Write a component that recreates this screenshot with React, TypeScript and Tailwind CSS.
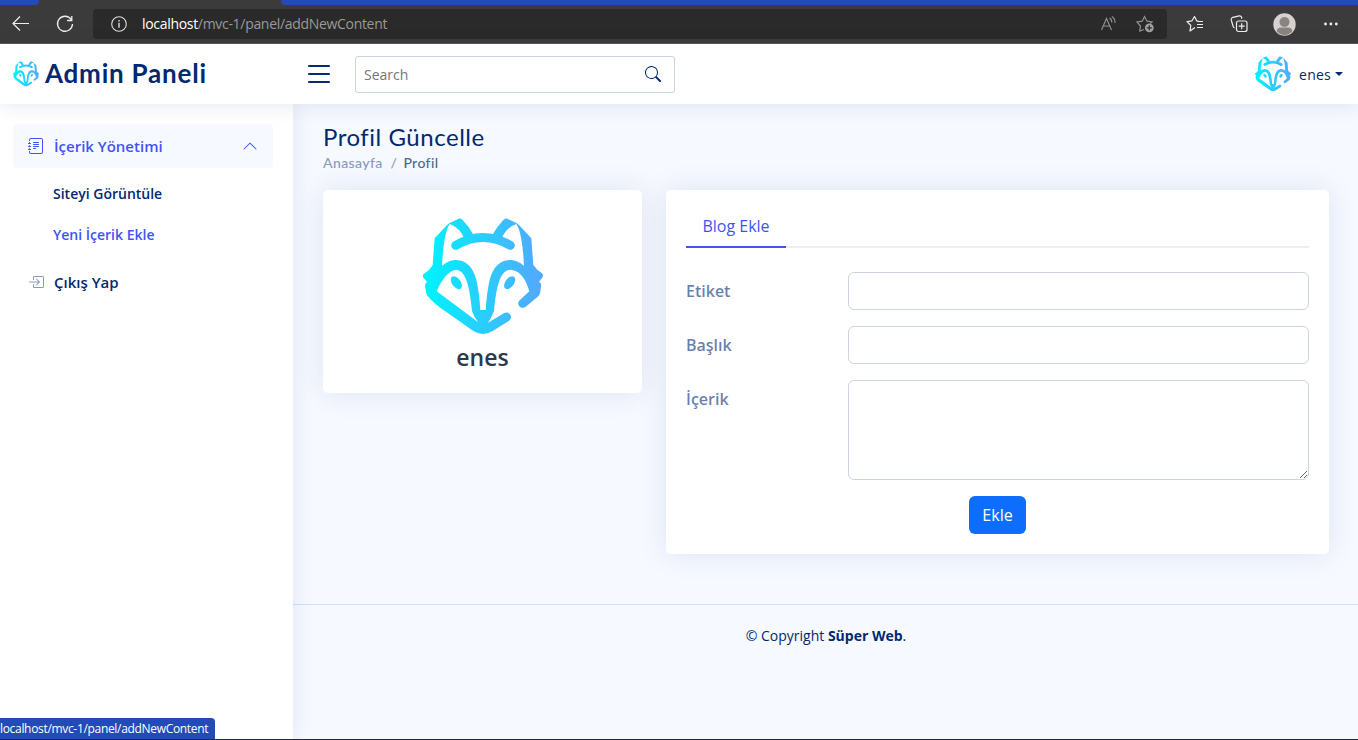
import { useId } from 'react';
import type { ReactNode } from 'react';
import { BsBoxArrowInRight, BsChevronUp, BsJournalText, BsList, BsSearch } from 'react-icons/bs';

function FoxLogo({ className }: { className: string }) {
  const id = useId();
  const fill = `url(#${id})`;
  return (
    <svg viewBox="39 36 360 360" className={className} aria-hidden="true">
      <defs>
        <linearGradient id={id} gradientUnits="userSpaceOnUse" x1="50" y1="0" x2="370" y2="0">
          <stop offset="0" stopColor="#00f2fe" />
          <stop offset="1" stopColor="#4facfe" />
        </linearGradient>
      </defs>
      <g fill={fill}>
        <path d="M146 41Q152 39 157 44Q177 64 189 87L165 105Q150 67 119 57Q101 84 96 182Q118 164 140 165Q184 168 199 224Q208 264 211 315H227Q230 264 239 224Q254 168 298 165Q320 164 342 182Q337 84 319 57Q288 67 273 105L249 87Q261 64 281 44Q286 39 292 41L319 54Q325 57 364 100L370 180Q380 195 396 205Q402 211 396 219L387 230Q396 235 393 243L391 260Q390 269 383 275L349 304C334 317 316 299 329 286L358 259Q340 196 300 194C270 196 259 245 252 318Q246 335 234 353L283 324C299 316 312 338 295 349L248 378Q219 396 190 378L92 309Q51 278 49 265L45 244Q44 236 51 230L40 218Q36 209 44 205Q60 195 68 180L74 100Q113 57 119 54ZM80 259L205 352Q191 335 186 318C179 245 168 196 138 194Q105 200 80 259Z" fillRule="evenodd" />
        <ellipse cx="139" cy="233" rx="13" ry="22" transform="rotate(-37 139 233)" />
        <ellipse cx="299" cy="233" rx="13" ry="22" transform="rotate(37 299 233)" />
      </g>
      <path d="M137 121Q219 74 301 121" fill="none" stroke={fill} strokeWidth="27" strokeLinecap="round" />
    </svg>
  );
}

function BrowserBar() {
  return (
    <div className="h-[44px] shrink-0 border-b border-[#5b5858] bg-[#3b3b3b] font-['Open_Sans',sans-serif]">
      <div className="flex h-[5px] justify-between">
        <div className="w-[39px] rounded-br bg-[#234bb8]" />
        <div className="w-[1077px] rounded-bl bg-[#234bb8]" />
      </div>
      <div className="flex h-[38px] items-center">
        <svg className="ml-3 h-[18px] w-[18px]" viewBox="0 0 18 18" fill="none" stroke="#eee" strokeWidth="1.2">
          <path d="M17 8.5H1M8 1.5l-7 7 7 7" />
        </svg>
        <svg className="ml-[26px] h-[18px] w-[18px]" viewBox="0 0 18 18" fill="none" stroke="#eee" strokeWidth="1.3">
          <path d="M15.2 4.5A7.5 7.5 0 1 0 16.5 9M15.8 1v4.5h-4.7" />
        </svg>
        <div className="ml-[19px] flex h-[30px] w-[1074px] items-center rounded bg-[#2a2a2a]">
          <svg className="ml-[18px] h-4 w-4" viewBox="0 0 16 16" fill="none" stroke="#ddd" strokeWidth="1.1">
            <circle cx="8" cy="8" r="7.3" />
            <path d="M8 6.7v5M8 4v1.4" strokeWidth="1.4" />
          </svg>
          <div className="ml-[15px] grow pb-px text-[14px] tracking-[-0.31px] whitespace-nowrap text-[#999]">
            <span className="text-white">localhost</span>/mvc-1/panel/addNewContent
          </div>
          <svg className="mr-[19px] h-[16px] w-[17px]" viewBox="0 0 17 16" fill="none" stroke="#929292" strokeWidth="1.1">
            <path d="M1.5 14L6.5 2.5l5 11.5M3.3 10h6.4M9.5 2Q12 3.5 11.8 6.5M11.8.5Q15.2 2.5 15 7" />
          </svg>
          <svg className="mr-[13px] h-[18px] w-[18px]" viewBox="0 0 18 18" fill="none" stroke="#929292" strokeWidth="1.2">
            <path d="M8 14.5L3.8 16l.6-5L1 7l5.2-.8L8.5 1.5 11 6.2l5 .8-1.7 1.5" />
            <circle cx="13.3" cy="12.8" r="4.4" fill="#a0a0a0" stroke="none" />
            <path d="M13.3 10.3v5M10.8 12.8h5" stroke="#292929" />
          </svg>
        </div>
        <svg className="ml-[19px] h-[18px] w-[18px]" viewBox="0 0 18 18" fill="none" stroke="#eee" strokeWidth="1.2">
          <path d="M9 12.5L4 16l.8-5.5L1 6.6l5-.8L8.5 1.5l2.2 4.3 1.8.4M11 6.5h6M11 9.5h6M11 12.5h6" strokeLinejoin="round" />
        </svg>
        <svg className="ml-[26px] h-[18px] w-[18px]" viewBox="0 0 18 18" fill="none" stroke="#eee" strokeWidth="1.2">
          <rect x="6.5" y="6" width="10.5" height="10.5" rx="2" />
          <path d="M4.6 13Q3.2 12.5 3 11L1.2 4.9Q.9 2.9 2.8 2.3L9.3.9Q11 .7 11.7 2.5v1.2M11.7 8.2v6M8.7 11.2h6" />
        </svg>
        <svg className="ml-[25px] h-[23px] w-[23px]" viewBox="0 0 23 23">
          <circle cx="11.5" cy="11.5" r="11.2" fill="#d4d1ce" />
          <circle cx="11.5" cy="9" r="5" fill="#898482" />
          <path d="M3.8 18.3Q4 14.5 8 14.5h7q4 0 4.2 3.8a10 10 0 0 1-15.4 0" fill="#898482" />
        </svg>
        <svg className="ml-[26px] h-4 w-4" viewBox="0 0 16 16" fill="#eee">
          <circle cx="3.5" cy="8" r="1.4" />
          <circle cx="8.9" cy="8" r="1.4" />
          <circle cx="14.3" cy="8" r="1.4" />
        </svg>
      </div>
    </div>
  );
}

function Header() {
  return (
    <header className="z-20 flex h-[60px] shrink-0 items-center bg-white shadow-[0_2px_20px_rgba(1,41,112,0.1)]">
      <div className="flex w-[293px] items-center pl-[13px]">
        <FoxLogo className="h-[26px] w-[26px]" />
        <span className="ml-[6px] pb-[2px] text-[26px] leading-[30px] font-bold tracking-[0.78px] whitespace-nowrap text-[#012970] font-['Lato',sans-serif]">Admin Paneli</span>
      </div>
      <BsList className="ml-[10px] h-8 w-8 text-[#012970]" />
      <div className="ml-5 flex h-[37px] w-80 items-center justify-between rounded-[3px] border border-[#012970]/20 px-2 text-[14px]">
        <span className="text-[#757575]">Search</span>
        <BsSearch className="mr-[5px] h-4 w-4 text-[#012970]" />
      </div>
      <div className="mr-[15px] ml-auto flex items-center text-[14px] font-medium tracking-[0.25px] text-[#012970]">
        <FoxLogo className="h-9 w-9" />
        <span className="ml-2">enes</span>
        <span className="ml-1 border-x-4 border-t-4 border-x-transparent border-t-[#012970]" />
      </div>
    </header>
  );
}

function Sidebar() {
  return (
    <aside className="z-10 w-[293px] shrink-0 bg-white pt-5 pl-[13px] font-semibold text-[#012970] shadow-[0_0_20px_rgba(1,41,112,0.1)]">
      <div className="flex h-11 w-[260px] items-center rounded bg-[#f6f9ff] px-[15px] text-[15px] text-[#4154f1]">
        <BsJournalText className="h-4 w-4" />
        <span className="ml-[10px] grow">İçerik Yönetimi</span>
        <BsChevronUp className="h-4 w-4" />
      </div>
      <div className="pt-[5px] pl-10 text-[14px]">
        <div className="flex h-[41px] items-center">Siteyi Görüntüle</div>
        <div className="flex h-[41px] items-center text-[#4154f1]">Yeni İçerik Ekle</div>
      </div>
      <div className="mt-[5px] flex h-[45px] items-center px-[15px] text-[15px]">
        <BsBoxArrowInRight className="mb-px h-4 w-4 text-[#899bbd]" />
        <span className="ml-[10px]">Çıkış Yap</span>
      </div>
    </aside>
  );
}

function Card({ className, children }: { className: string; children: ReactNode }) {
  return <section className={`rounded-[5px] bg-white shadow-[0_0_30px_rgba(1,41,112,0.1)] ${className}`}>{children}</section>;
}

function Field({ label, children }: { label: string; children: ReactNode }) {
  return (
    <label className="mb-4 flex">
      <span className="w-[162px] shrink-0 pt-[7px] font-semibold text-[#012970]/60">{label}</span>
      {children}
    </label>
  );
}

export default function App() {
  return (
    <div className="relative flex h-[740px] w-[1358px] flex-col overflow-hidden bg-[#f6f9ff] font-['Open_Sans',sans-serif] text-[16px] text-[#444]">
      <BrowserBar />
      <Header />
      <div className="flex min-h-0 grow">
        <Sidebar />
        <div className="grow pt-[18px]">
          <div className="h-[68px] pl-[30px] font-['Lato',sans-serif]">
            <h1 className="text-[24px] leading-[30px] font-normal tracking-[0.53px] text-[#012970]">Profil Güncelle</h1>
            <div className="flex gap-2 text-[14px] leading-[21px] font-medium tracking-[0.4px] text-[#899bbd]">
              <span>Anasayfa</span>
              <span>/</span>
              <span className="-ml-0.5 text-[#51678f]">Profil</span>
            </div>
          </div>
          <main className="flex items-start gap-6 px-[30px]">
            <Card className="flex h-[203px] w-[319px] flex-col items-center pt-[27px]">
              <FoxLogo className="h-[120px] w-[120px]" />
              <h2 className="mt-[5px] text-[23px] leading-[30px] font-semibold text-[#2c384e]">enes</h2>
            </Card>
            <Card className="h-[364px] w-[663px] px-5 pt-4">
              <div className="mb-6 flex h-[42px] border-b-2 border-[#ebeef4]">
                <span className="-mb-[2px] flex w-[100px] items-center justify-center border-b-2 border-[#4154f1] text-[#4154f1]">Blog Ekle</span>
              </div>
              <Field label="Etiket">
                <input className="h-[38px] min-w-0 grow rounded-md border border-[#ced4da] px-3" />
              </Field>
              <Field label="Başlık">
                <input className="h-[38px] min-w-0 grow rounded-md border border-[#ced4da] px-3" />
              </Field>
              <Field label="İçerik">
                <textarea className="h-[100px] min-w-0 grow rounded-md border border-[#ced4da] px-3" />
              </Field>
              <button className="mx-auto block h-[38px] w-[57px] rounded-md bg-[#0d6efd] text-white">Ekle</button>
            </Card>
          </main>
          <footer className="mt-[50px] border-t border-[#cddfff] pt-5 text-center text-[14px] leading-[21px] text-[#012970]">
            © Copyright <strong className="font-bold">Süper Web</strong>.
          </footer>
        </div>
      </div>
      <div className="absolute bottom-0 left-0 z-30 h-px w-full bg-[#1d2b50]" />
      <div className="absolute bottom-px left-0 z-30 flex h-[21px] w-[215px] items-center rounded-tr bg-[#234bb8] text-[12px] tracking-[-0.32px] whitespace-nowrap text-white">
        localhost/mvc-1/panel/addNewContent
      </div>
    </div>
  );
}
